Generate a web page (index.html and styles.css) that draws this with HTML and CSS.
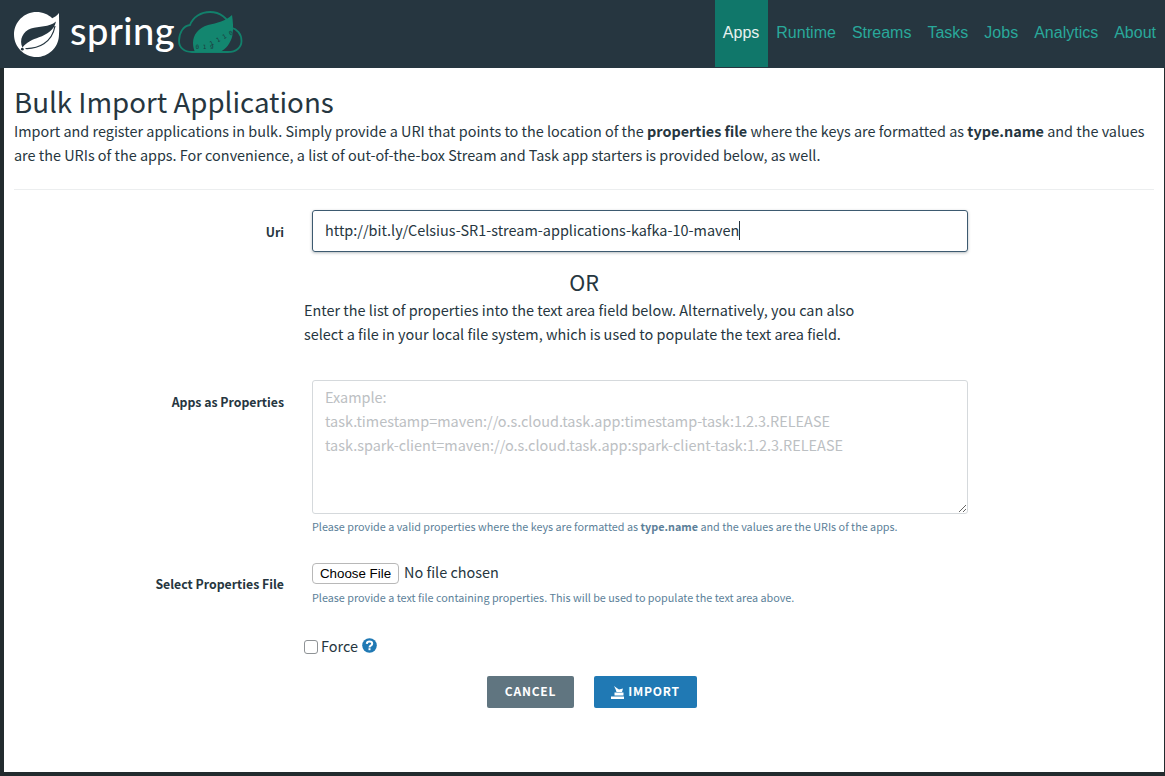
FILE: index.html
```html
<!DOCTYPE html>
<html lang="en">
<head>
<meta charset="utf-8">
<title>Bulk Import Applications</title>
<link rel="stylesheet" href="styles.css">
</head>
<body>
<header class="navbar">
  <a class="brand" href="#">
    <svg class="leaf" width="50" height="50" viewBox="12 9 50 50">
      <path fill="#fff" d="M59 13c-2 2.600-4.300 4.100-6.800 5.200C48.400 14.500 42.700 12 36.500 12 24.100 12 14 22.100 14 34.500S24.100 57 36.500 57c11.800 0 21.600-9.200 22.400-20.800.6-6.500.1-14.500.1-23.200z"/>
      <path fill="#263640" d="M22.500 47.500C18.800 40 23 31 31 28.500c8-2.400 18-1 25-7-1.800 8.500-9 13-17 15.800-6.500 2.300-12.300 4.800-16.500 10.200z"/>
      <path fill="none" stroke="#263640" stroke-width="1.200" d="M25.500 48.500C38 49 52 43 55 26"/>
      <circle cx="22.300" cy="49.200" r="1.400" fill="#263640"/>
    </svg>
    <span class="wordmark">spring</span>
    <svg class="cloud" width="65" height="43" viewBox="178 11 65 43">
      <path fill="none" stroke="#12806b" stroke-width="1.800" d="M192 52H228C236 52 241.500 47.500 241.500 41 241.500 34 237 29 231 27.500 228 18 220 12 210 12 201 12 193 17 190 25 183 26 179 33 179 41 179 47.500 184 52 192 52Z"/>
      <path fill="#13866f" d="M232 15C226 21 217 23 208 25 198 28 193 35 193 43 193 47 194 50 195 52H220C226 49 231 43 232.500 35 233.500 28 233 21 232 15Z"/>
      <text class="digits" x="195.500" y="49">0 1 9</text>
      <text class="digits" x="211" y="46" transform="rotate(-28 211 46)">1 1 1 0</text>
    </svg>
  </a>
  <nav class="menu">
    <a class="menu-item active" href="#">Apps</a>
    <a class="menu-item" href="#">Runtime</a>
    <a class="menu-item" href="#">Streams</a>
    <a class="menu-item" href="#">Tasks</a>
    <a class="menu-item" href="#">Jobs</a>
    <a class="menu-item" href="#">Analytics</a>
    <a class="menu-item" href="#">About</a>
  </nav>
</header>
<main class="content">
  <h1 class="title">Bulk Import Applications</h1>
  <p class="intro">Import and register applications in bulk. Simply provide a URI that points to the location of the <strong>properties file</strong> where the keys are formatted as <strong>type.name</strong> and the values are the URIs of the apps. For convenience, a list of out-of-the-box Stream and Task app starters is provided below, as well.</p>
  <hr class="divider">
  <form class="form">
    <div class="row uri-row">
      <label class="label uri-label" for="uri">Uri</label>
      <div class="uri-box" id="uri">http://bit.ly/Celsius-SR1-stream-applications-kafka-10-maven<span class="caret"></span></div>
    </div>
    <div class="or">OR</div>
    <p class="or-text">Enter the list of properties into the text area field below. Alternatively, you can also<br>select a file in your local file system, which is used to populate the text area field.</p>
    <div class="row props-row">
      <label class="label props-label" for="props">Apps as Properties</label>
      <div class="field">
        <textarea class="area" id="props" placeholder="Example:&#10;task.timestamp=maven://o.s.cloud.task.app:timestamp-task:1.2.3.RELEASE&#10;task.spark-client=maven://o.s.cloud.task.app:spark-client-task:1.2.3.RELEASE"></textarea>
        <p class="help">Please provide a valid properties where the keys are formatted as <strong>type.name</strong> and the values are the URIs of the apps.</p>
      </div>
    </div>
    <div class="row file-row">
      <label class="label file-label">Select Properties File</label>
      <div class="field">
        <div class="file-line"><button type="button" class="file-btn">Choose File</button><span class="file-none">No file chosen</span></div>
        <p class="help file-help">Please provide a text file containing properties. This will be used to populate the text area above.</p>
      </div>
    </div>
    <div class="force">
      <span class="check"></span><span class="force-text">Force</span>
      <svg class="q" width="15" height="15" viewBox="0 0 15 15">
        <circle cx="7.500" cy="7.500" r="7.300" fill="#2079b4"/>
        <path fill="none" stroke="#fff" stroke-width="2" d="M4.800 5.900c.1-1.500 1.200-2.300 2.700-2.300 1.600 0 2.700.9 2.700 2.100 0 1-.6 1.500-1.400 2-.8.500-1.300.8-1.300 1.800"/>
        <rect x="6.500" y="10.200" width="2" height="2" fill="#fff"/>
      </svg>
    </div>
    <div class="actions">
      <button type="button" class="btn btn-cancel">CANCEL</button>
      <button type="button" class="btn btn-import">
        <svg class="btn-icon" width="13" height="14" viewBox="0 0 13 14">
          <path fill="#fff" d="M0 11.500h13V14H0zM3.500 7.500h9v3h-9zM3 1l3.500 2.500L8 4.500 12 3.500 11 7H5.500L4.500 4z"/>
        </svg>IMPORT</button>
    </div>
  </form>
</main>
</body>
</html>
```
FILE: styles.css
```css
* { box-sizing: border-box; }
html, body { height: 100%; }
body {
  margin: 0;
  background: #222b2e;
  color: #263640;
  font-family: "Noto Sans CJK SC", "Source Sans Pro", "Noto Sans", sans-serif;
  font-size: 14.45px;
  line-height: 24px;
  display: flex;
  flex-direction: column;
  height: 776px;
  overflow: hidden;
}
.navbar {
  height: 68px;
  flex: none;
  background: #263640;
  display: flex;
  justify-content: space-between;
}
.brand {
  display: flex;
  align-items: flex-start;
  padding: 9px 0 0 12px;
  text-decoration: none;
}
.wordmark {
  color: #fff;
  font-family: "Lato", sans-serif;
  font-size: 38px;
  font-weight: 500;
  line-height: 40px;
  margin: 1px 0 0 8px;
  letter-spacing: .5px;
  width: 108px;
}
.cloud { display: block; margin-top: 2px; }
.digits { fill: #1d3a40; font: 6px "DejaVu Sans Mono", monospace; }
.menu { display: flex; padding-right: 1px; }
.menu-item {
  height: 67px;
  padding: 0 8px;
  color: #29a99b;
  font-family: "Liberation Sans", Arial, sans-serif;
  font-size: 16px;
  line-height: 65px;
  text-decoration: none;
}
.menu-item.active { background: #10776a; color: #e8f2f0; padding-right: 9px; }
.content {
  flex: 1;
  background: #fff;
  margin: 0 1px 4px 4px;
  padding: 0 10px;
}
.title {
  margin: 17px 0 0;
  font-size: 27.7px;
  line-height: 33px;
  font-weight: 400;
}
.intro { margin: 1px 0 0; font-size: 14.42px; }
.intro strong, .help strong { font-weight: 700; }
.divider { margin: 22px 0 0; border: 0; border-top: 1px solid #eceeef; }
.row { display: grid; grid-template-columns: 270px 656px; column-gap: 28px; }
.label { text-align: right; font-size: 12.3px; font-weight: 700; line-height: 18px; }
.uri-row { margin-top: 20px; }
.uri-label { padding-top: 13px; }
.uri-box {
  height: 42px;
  border: 1px solid #3d5a70;
  border-radius: 3px;
  box-shadow: 0 1px 3px rgba(38, 54, 64, .35);
  padding: 7px 12px;
  white-space: nowrap;
}
.caret { display: inline-block; width: 1px; height: 19px; background: #263640; vertical-align: -4px; }
.or { margin: 16px 0 0 570px; width: 0; font-size: 21.6px; line-height: 28px; display: flex; justify-content: center; }
.or-text { margin: 2px 0 0 290px; }
.props-row { margin-top: 34px; }
.props-label { padding-top: 13px; }
.field { min-width: 0; }
.area {
  display: block;
  width: 656px;
  height: 134px;
  padding: 4px 12px;
  border: 1px solid #d5d9dc;
  border-radius: 3px;
  font: inherit;
  line-height: 24px;
  color: #263640;
  white-space: pre;
  overflow: hidden;
}
.area::placeholder { color: #bcc0c3; opacity: 1; }
.help { margin: 3px 0 0; font-size: 10.8px; line-height: 18px; color: #5c7f99; }
.file-row { margin-top: 24px; }
.file-label { padding-top: 16px; }
.file-line { display: flex; align-items: flex-start; height: 24px; margin-top: 2px; }
.file-btn {
  width: 87px;
  height: 21px;
  margin-top: 2px;
  padding: 0;
  background: #fff;
  border: 1px solid #b8b8b8;
  border-radius: 4px;
  font: 13.33px/19px "Liberation Sans", Arial, sans-serif;
  color: #000;
}
.file-none { margin-left: 5px; line-height: 21px; }
.file-help { margin-top: 3px; }
.force { display: flex; align-items: center; height: 24px; margin: 28px 0 0 290px; }
.check { width: 14px; height: 14px; border: 1px solid #8f9396; border-radius: 3px; margin: 2px 3px 0 0; background: #fff; }
.q { margin: -1px 0 0 4px; }
.actions { display: flex; margin: 18px 0 0 473px; gap: 20px; }
.btn {
  height: 32px;
  border: 0;
  border-radius: 2px;
  color: #fff;
  font-family: inherit;
  font-size: 12px;
  font-weight: 700;
  letter-spacing: .8px;
  padding: 0 0 3px;
  display: flex;
  align-items: center;
  justify-content: center;
}
.btn-cancel { width: 87px; background: #607580; }
.btn-import { width: 103px; background: #2079b4; }
.btn-icon { margin: 3px 4px 0 0; }
```
